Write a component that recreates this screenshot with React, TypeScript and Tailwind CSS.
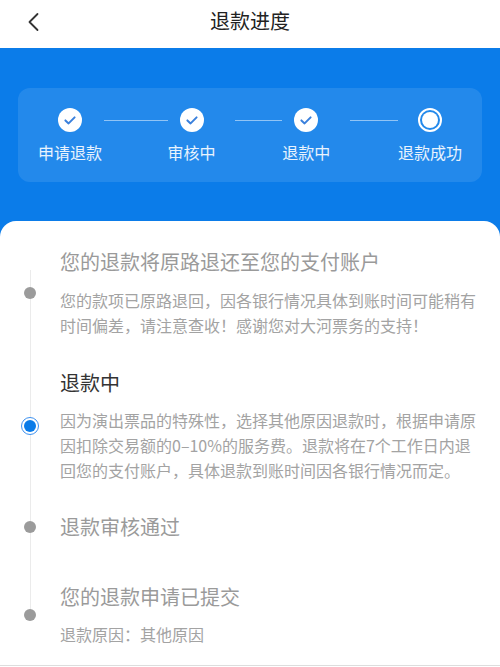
import { ReactNode } from 'react';

interface StepProps {
  label: string;
  done: boolean;
}

function Step({ label, done }: StepProps) {
  return (
    <div className="flex flex-col items-center shrink-0">
      {done ? (
        <div className="w-6 h-6 rounded-full bg-white flex items-center justify-center">
          <svg width="24" height="24" viewBox="0 0 24 24" fill="none">
            <polyline
              points="7.4,12.4 10.6,15.4 16.6,9.4"
              stroke="#3a80dc"
              strokeWidth="2"
              strokeLinecap="round"
              strokeLinejoin="round"
            />
          </svg>
        </div>
      ) : (
        <div className="w-6 h-6 rounded-full border-2 border-white p-[2px]">
          <div className="w-full h-full rounded-full bg-white" />
        </div>
      )}
      <span className="mt-[9px] text-[16px] leading-[22px] text-white/90">{label}</span>
    </div>
  );
}

interface TimelineItemProps {
  title: string;
  active?: boolean;
  className?: string;
  children?: ReactNode;
}

function TimelineItem({ title, active, className, children }: TimelineItemProps) {
  return (
    <div className={`flex items-center ${className ?? ''}`}>
      <div className="w-[60px] shrink-0 flex justify-center">
        {active ? (
          <div className="relative w-[18px] h-[18px] rounded-full border border-[#3d91f0] bg-white p-[2px]">
            <div className="w-full h-full rounded-full bg-[#0a7be8]" />
          </div>
        ) : (
          <div className="relative w-[12px] h-[12px] rounded-full bg-[#9b9b9b]" />
        )}
      </div>
      <div className="flex-1 pr-5">
        <div
          className={`text-[20px] leading-[28px] ${active ? 'text-[#333333]' : 'text-[#9a9a9a]'}`}
        >
          {title}
        </div>
        {children}
      </div>
    </div>
  );
}

export default function App() {
  return (
    <div className="w-[500px] h-[667px] overflow-hidden bg-white font-['Noto_Sans_CJK_SC','Noto_Sans',sans-serif]">
      {/* Header */}
      <div className="h-12 bg-white relative flex justify-center pt-[7px]">
        <button className="absolute left-[27px] top-[12px]">
          <svg width="13" height="20" viewBox="0 0 13 20" fill="none">
            <polyline
              points="10.5,2 2.5,10 10.5,18"
              stroke="#333333"
              strokeWidth="1.8"
              strokeLinecap="round"
              strokeLinejoin="round"
            />
          </svg>
        </button>
        <span className="text-[20px] leading-[28px] text-[#222222]">退款进度</span>
      </div>

      {/* Progress banner */}
      <div className="bg-[#0b7ce9] pt-10 px-[18px] pb-[55px]">
        <div className="h-[94px] rounded-xl bg-white/10 pt-5 px-5 flex items-start">
          <Step label="申请退款" done />
          <div className="mt-3 ml-[2px] w-[64px] h-px bg-white/50" />
          <Step label="审核中" done />
          <div className="mt-3 ml-[19px] w-[48px] h-px bg-white/50" />
          <Step label="退款中" done />
          <div className="mt-3 ml-[20px] w-[48px] h-px bg-white/50" />
          <Step label="退款成功" done={false} />
        </div>
      </div>

      {/* Timeline card */}
      <div className="-mt-4 rounded-t-2xl bg-white pt-[27px] pb-[19px] border-b border-[#dddddd]">
        <div className="relative">
          <div className="absolute left-[30px] top-[22px] bottom-[33px] w-px bg-[#ebebeb]" />

          <TimelineItem title="您的退款将原路退还至您的支付账户">
            <p className="mt-3 text-[16px] leading-[25px] text-[#a3a3a3]">
              您的款项已原路退回，因各银行情况具体到账时间可能稍有时间偏差，请注意查收！感谢您对大河票务的支持！
            </p>
          </TimelineItem>

          <TimelineItem title="退款中" active className="mt-[31px]">
            <p className="mt-[11px] text-[16px] leading-[25px] text-[#a3a3a3]">
              因为演出票品的特殊性，选择其他原因退款时，根据申请原因扣除交易额的0–10%的服务费。退款将在7个工作日内退回您的支付账户，具体退款到账时间因各银行情况而定。
            </p>
          </TimelineItem>

          <TimelineItem title="退款审核通过" className="mt-[30px]" />

          <TimelineItem title="您的退款申请已提交" className="mt-[42px]">
            <p className="mt-[11px] text-[16px] leading-[24px] text-[#a3a3a3]">
              退款原因：其他原因
            </p>
          </TimelineItem>
        </div>
      </div>
    </div>
  );
}
